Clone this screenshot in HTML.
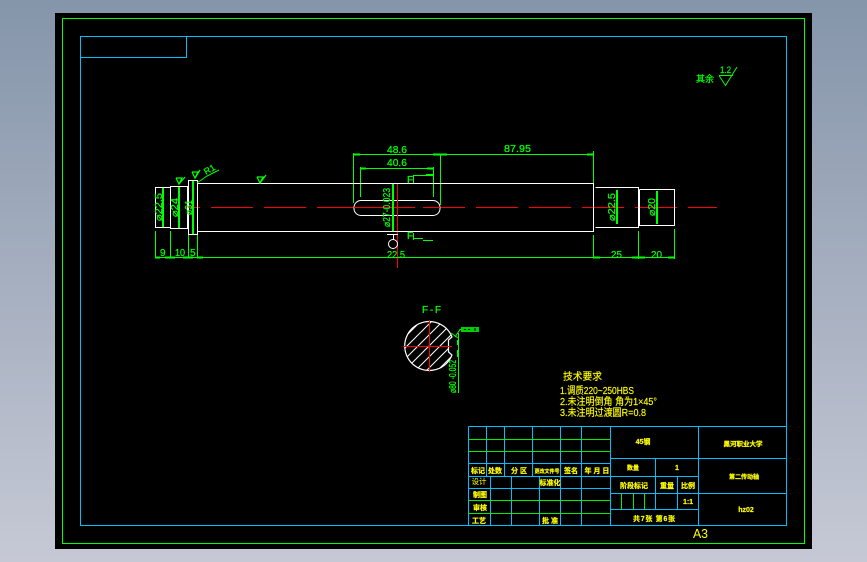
<!DOCTYPE html>
<html>
<head>
<meta charset="utf-8">
<style>
html,body{margin:0;padding:0;width:867px;height:562px;overflow:hidden;background:linear-gradient(#8595aa,#c6c9d5);}
svg{display:block;position:absolute;left:0;top:0;}
text{font-family:"Liberation Sans","Noto Sans CJK SC",sans-serif;}
.g{fill:#00ff00;font-size:10px;stroke:#00ff00;stroke-width:.25;}
.y{fill:#ffff00;font-size:7px;font-weight:bold;text-anchor:middle;stroke:#ffff00;stroke-width:.2;}
.t{fill:#ffff00;font-size:10px;stroke:#ffff00;stroke-width:.15;}
</style>
</head>
<body>
<svg width="867" height="562" viewBox="0 0 867 562">
<rect x="55" y="13" width="757" height="536" fill="#000"/>
<g shape-rendering="crispEdges" fill="none">
<rect x="62.5" y="18.5" width="742" height="525" stroke="#00ff00"/>
<path stroke="#00bfff" d="M80.5 36.5H786.5V525.5H80.5ZM80.5 57.5H186.5V36.5"/>
<path stroke="#00bfff" d="M468.5 426.5H786.5M468.5 463.5H610.5M468.5 476.5H698.5M468.5 488.5H610.5M610.5 458.5H786.5M610.5 493.5H786.5M610.5 509.5H698.5M468.5 426.5V525.5M486.5 426.5V476.5M504.5 426.5V476.5M532.5 426.5V476.5M560.5 426.5V525.5M581.5 426.5V525.5M610.5 426.5V525.5M698.5 426.5V525.5M490.5 476.5V525.5M511.5 476.5V525.5M539.5 476.5V525.5M655.5 458.5V509.5M677.5 476.5V509.5"/>
<path stroke="#00ee00" d="M468.5 439.5H610.5M468.5 451.5H610.5M468.5 500.5H610.5M468.5 513.5H610.5M621.5 493.5V509.5M633.5 493.5V509.5M644.5 493.5V509.5"/>
<path stroke="#ff0000" d="M186 207.5H200M211 207.5H253M264 207.5H306M317 207.5H359M370 207.5H415M423 207.5H465M476 207.5H518M529 207.5H571M582 207.5H624M635 207.5H677M688 207.5H717M397.5 184V268"/>
<path stroke="#00ff00" d="M353.5 153V203M353.500 154.500H594M440.500 154V205M593.500 151V183M593.500 235V258M360.500 167V197M360.500 168.500H433M433.500 167V197M413 175.500H433M413.500 175V183M413.500 233V240M413.500 238.500H423M423 240.500H433M155.500 231V257M170.500 231V257M188.500 235V257M197.500 235V258M155.500 257.500H675M638.500 231V259M674.500 229V259"/>
<path stroke="#00ff00" stroke-width="2" d="M393 184V231M163 188V227M179 187V228M193 181V234M617 190V224M657 191V224M353 154.500h7M433 154.500h7M440 154.500h7M587 154.500h7M360 168.500h6M427 168.500h6M155 257.500h5M165 257.500h5M170 257.500h5M183 257.500h5M188 257.500h5M197 257.500h6M593 257.500h7M632 257.500h6M639 257.500h6M668 257.500h6M426 175h7"/>
<g stroke="#ffffff">
<path d="M155.500 187.500H170.500V186.500H187.500V228.500H170.500V227.500H155.500ZM170.500 187V228"/>
<rect x="188.500" y="180.500" width="9" height="54"/>
<path d="M198 183.500H593.500V231.500H198M593.500 183V231M595.500 187.500H638.500V227.500H595.500M639.500 189.500H674.500V225.500H639.500V189.500"/>
<path d="M387 234.500H398M393.500 235V240"/>
</g>
</g>
<rect x="354" y="200.500" width="86" height="15" rx="7" ry="7" fill="#000" stroke="#fff"/>
<path d="M354 207.500H415M423 207.500H440M397.500 200V216" stroke="#ff0000" fill="none" shape-rendering="crispEdges"/>
<path d="M393 200V216" stroke="#00ff00" stroke-width="2" shape-rendering="crispEdges"/>
<circle cx="393" cy="244" r="4.500" fill="none" stroke="#fff"/>
<path d="M197 183L207 176L219 170" stroke="#00ff00" fill="none"/>
<path d="M176 178h6l-3 6-3-6M179 184l6-7M192 172h6l-3 6-3-6M195 178l5-8M257 177h6l-3 6-3-6M260 183l6-8" stroke="#00ff00" stroke-width="1.300" fill="none"/>
<defs><clipPath id="c"><path d="M452 337A24.500 24.500 0 1 0 452 355L448.500 352V340Z"/></clipPath></defs>
<g clip-path="url(#c)" stroke="#fff" fill="none">
<path d="M380 351L440 291M380 362L451 291M380 373L462 291M380 384L473 291M380 395L484 291M390 396L490 296M401 396L490 307M412 396L490 318M423 396L490 329"/>
</g>
<path d="M452 337A24.500 24.500 0 1 0 452 355L448.500 352V340Z" fill="none" stroke="#fff" stroke-width="1.200"/>
<path d="M403 346.500H452M429.500 320V372" stroke="#ff0000" shape-rendering="crispEdges"/>
<path d="M458.500 333V393M461 329.500H460L455 337M451 333L458 338" stroke="#00ff00" fill="none"/>
<rect x="461" y="327" width="18" height="5" fill="#00d000"/>
<path d="M464 329.500h2M468 329.500h2M475 328v3" stroke="#000"/>
<path d="M458 340V345M458 350V357" stroke="#00ff00" stroke-width="2" shape-rendering="crispEdges"/>
<path d="M719 75.500H733M719 75.500L725.500 85.500L737 67" stroke="#00ff00" fill="none"/>
<text class="g" x="387" y="153" textLength="20" lengthAdjust="spacingAndGlyphs">48.6</text>
<text class="g" x="387" y="166" textLength="20" lengthAdjust="spacingAndGlyphs">40.6</text>
<text class="g" x="504" y="152" textLength="27" lengthAdjust="spacingAndGlyphs">87.95</text>
<text class="g" x="407" y="183">F</text>
<text class="g" x="407" y="239">F</text>
<text class="g" x="387" y="258" textLength="18" lengthAdjust="spacingAndGlyphs">22.5</text>
<text class="g" x="160" y="256">9</text>
<text class="g" x="175" y="256" textLength="10" lengthAdjust="spacingAndGlyphs">10</text>
<text class="g" x="190" y="256">5</text>
<text class="g" x="611" y="258" textLength="11" lengthAdjust="spacingAndGlyphs">25</text>
<text class="g" x="651" y="258" textLength="11" lengthAdjust="spacingAndGlyphs">20</text>
<text class="g" x="422" y="313" textLength="19" lengthAdjust="spacing">F-F</text>
<text class="g" x="696" y="82" style="font-size:9px" textLength="18">其余</text>
<text class="g" x="720" y="73" style="font-size:9px" textLength="11" lengthAdjust="spacingAndGlyphs">1.2</text>
<text class="g" x="206" y="175" style="font-size:9px" transform="rotate(-30 206 175)">R1</text>
<text class="g" transform="translate(162 221) rotate(-90)" textLength="28" lengthAdjust="spacingAndGlyphs">⌀22.5</text>
<text class="g" transform="translate(178 217) rotate(-90)" textLength="19" lengthAdjust="spacingAndGlyphs">⌀24</text>
<text class="g" transform="translate(192 215) rotate(-90)" textLength="15" lengthAdjust="spacingAndGlyphs">⌀31</text>
<text class="g" transform="translate(390 227) rotate(-90)" textLength="39" lengthAdjust="spacingAndGlyphs">⌀27-0.023</text>
<text class="g" transform="translate(615 221) rotate(-90)" textLength="28" lengthAdjust="spacingAndGlyphs">⌀22.5</text>
<text class="g" transform="translate(655 216) rotate(-90)" textLength="18" lengthAdjust="spacingAndGlyphs">⌀20</text>
<text class="g" transform="translate(456 393) rotate(-90)" textLength="33" lengthAdjust="spacingAndGlyphs">⌀80 -0.052</text>
<text class="t" x="563" y="380" textLength="39" lengthAdjust="spacingAndGlyphs">技术要求</text>
<text class="t" x="560" y="394" textLength="74" lengthAdjust="spacingAndGlyphs">1.调质220~250HBS</text>
<text class="t" x="560" y="405" textLength="97" lengthAdjust="spacingAndGlyphs">2.未注明倒角 角为1×45°</text>
<text class="t" x="560" y="416" textLength="86" lengthAdjust="spacingAndGlyphs">3.未注明过渡圆R=0.8</text>
<text class="y" x="478" y="473">标记</text>
<text class="y" x="495" y="473">处数</text>
<text class="y" x="519" y="473">分 区</text>
<text class="y" x="547" y="473" style="font-size:5px">更改文件号</text>
<text class="y" x="571" y="473">签名</text>
<text class="y" x="597" y="473">年 月 日</text>
<text class="y" x="479" y="484" style="font-weight:normal;font-size:7.500px;stroke-width:0">设计</text>
<text class="y" x="550" y="485">标准化</text>
<text class="y" x="480" y="497">制图</text>
<text class="y" x="480" y="510">审核</text>
<text class="y" x="479" y="523">工艺</text>
<text class="y" x="550" y="523">批 准</text>
<text class="y" x="643" y="444">45钢</text>
<text class="y" x="743" y="446" style="font-size:6.500px">黑河职业大学</text>
<text class="y" x="633" y="470" style="font-size:6px">数量</text>
<text class="y" x="677" y="470">1</text>
<text class="y" x="744" y="479" style="font-size:6px">第二传动轴</text>
<text class="y" x="634" y="488">阶段标记</text>
<text class="y" x="667" y="488">重量</text>
<text class="y" x="688" y="488">比例</text>
<text class="y" x="688" y="504">1:1</text>
<text class="y" x="746" y="512">hz02</text>
<text class="y" x="654" y="521" textLength="42">共7张 第6张</text>
<text x="693" y="538" fill="#ffff00" font-size="13" textLength="15" lengthAdjust="spacingAndGlyphs">A3</text>
</svg>
</body>
</html>
